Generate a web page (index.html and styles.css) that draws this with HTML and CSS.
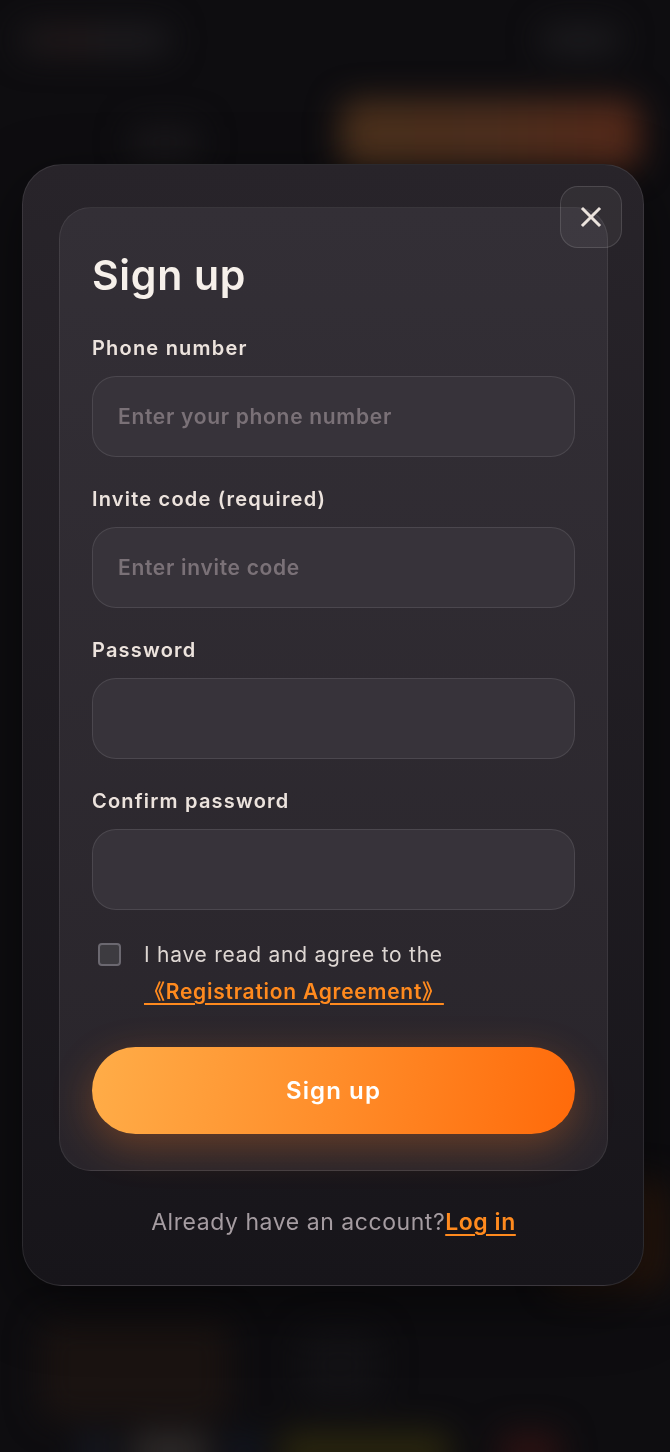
FILE: index.html
```html
<!DOCTYPE html>
<html lang="en">
<head>
  <meta charset="UTF-8" />
  <title>Sign up</title>
  <link rel="stylesheet" href="styles.css">
</head>
<body>
  <!-- page behind the dialog, blurred -->
  <div class="backdrop" aria-hidden="true">
    <header class="top-bar">
      <div class="logo"></div>
      <div class="top-btn"></div>
    </header>
    <section class="hero">
      <div class="hero-tag"></div>
      <div class="hero-cta"></div>
    </section>
    <section class="feed">
      <div class="feed-card"></div>
    </section>
    <section class="promo">
      <div class="promo-card"></div>
      <div class="promo-card dim"></div>
    </section>
    <nav class="tabbar">
      <span class="tab blue"></span>
      <span class="tab grey"></span>
      <span class="tab navy"></span>
      <span class="tab olive"></span>
      <span class="tab red"></span>
    </nav>
  </div>

  <div class="overlay">
    <div class="modal">
      <form class="form-card" onsubmit="return false">
        <h1 class="title">Sign up</h1>

        <div class="fields">
          <label class="field">
            <span class="field-label">Phone number</span>
            <input type="tel" placeholder="Enter your phone number">
          </label>
          <label class="field">
            <span class="field-label">Invite code (required)</span>
            <input type="text" placeholder="Enter invite code">
          </label>
          <label class="field">
            <span class="field-label">Password</span>
            <input type="password">
          </label>
          <label class="field">
            <span class="field-label">Confirm password</span>
            <input type="password">
          </label>
        </div>

        <label class="agree">
          <input type="checkbox" class="agree-box">
          <span class="agree-text">I have read and agree to the<br><a href="#" class="link">《Registration Agreement》</a></span>
        </label>

        <button type="submit" class="submit">Sign up</button>
      </form>

      <p class="footer">Already have an account?<a href="#" class="link">Log in</a></p>

      <button class="close" aria-label="Close">
        <svg width="22" height="22" viewBox="0 0 22 22">
          <path d="M3 3 L19 19 M19 3 L3 19" stroke="#ebe3dd" stroke-width="3" stroke-linecap="square" fill="none"/>
        </svg>
      </button>
    </div>
  </div>
</body>
</html>
```

FILE: styles.css
```css
/* reset */
* {
  margin: 0;
  padding: 0;
  box-sizing: border-box;
}

body {
  font-family: Inter, "Liberation Sans", "Noto Sans CJK SC", sans-serif;
  background-color: #0e0d10;
  height: 1452px;
  overflow: hidden;
}

/* blurred page behind the dialog */
.backdrop {
  height: 1452px;
  filter: blur(16px);
}

.top-bar {
  display: flex;
  justify-content: space-between;
  align-items: flex-start;
  height: 55px;
  padding: 25px 50px 0 20px;
}

.logo {
  width: 150px;
  height: 30px;
  border-radius: 8px;
  background: linear-gradient(90deg, #1b191b, #22191a 35%, #1f1d20 60%, #1b1a1d);
}

.top-btn {
  width: 80px;
  height: 30px;
  border-radius: 15px;
  background-color: #1c1b1e;
}

.hero {
  display: flex;
  justify-content: space-between;
  align-items: flex-start;
  padding: 45px 30px 0 130px;
}

.hero-tag {
  width: 70px;
  height: 35px;
  margin-top: 25px;
  border-radius: 8px;
  background-color: #19171a;
}

.hero-cta {
  width: 300px;
  height: 70px;
  border-radius: 18px;
  background: linear-gradient(90deg, #4a301c, #4d2f1e 50%, #55291a);
}

.feed {
  display: flex;
  justify-content: flex-end;
  padding: 1010px 0 0 0;
}

.feed-card {
  width: 120px;
  height: 110px;
  border-radius: 20px;
  background-color: #26160d;
}

.promo {
  display: flex;
  align-items: flex-start;
  gap: 70px;
  padding: 30px 40px 0;
}

.promo-card {
  width: 190px;
  height: 100px;
  border-radius: 16px;
  background-color: #1a1311;
}

.promo-card.dim {
  width: 80px;
  height: 70px;
  margin-top: 10px;
  background-color: #131215;
}

.tabbar {
  display: flex;
  gap: 20px;
  padding: 12px 80px 0;
}

.tab {
  display: block;
  width: 30px;
  height: 40px;
  border-radius: 10px;
}

.tab.blue { background-color: #171a24; }
.tab.grey { width: 80px; background-color: #2e2a29; }
.tab.navy { background-color: #121722; }
.tab.olive { width: 170px; background-color: #2a260e; }
.tab.red { width: 60px; margin-left: 30px; background-color: #2c1212; }

/* dialog */
.overlay {
  position: fixed;
  inset: 0;
  display: flex;
  align-items: flex-start;
  padding: 164px 0 0 22px;
}

.modal {
  position: relative;
  width: 622px;
  padding: 42px 35px 47px 36px;
  border: 1px solid rgba(255, 255, 255, 0.09);
  border-radius: 40px;
  background: linear-gradient(180deg, #28242a, #17151a);
  box-shadow: 0 20px 60px rgba(0, 0, 0, 0.5);
}

.form-card {
  padding: 43px 32px 36px;
  border: 1px solid rgba(255, 255, 255, 0.08);
  border-radius: 32px;
  background: linear-gradient(180deg, #332f36, #29252b);
}

.title {
  font-size: 41px;
  line-height: 49px;
  font-weight: 600;
  letter-spacing: 0.7px;
  color: #f6f0ea;
  margin-bottom: 36px;
}

.fields {
  display: flex;
  flex-direction: column;
  gap: 30px;
}

.field {
  display: block;
}

.field-label {
  display: block;
  font-size: 20px;
  line-height: 24px;
  font-weight: 600;
  letter-spacing: 1.2px;
  color: #ece3dd;
  margin-bottom: 16px;
}

.field input {
  display: block;
  width: 100%;
  height: 81px;
  padding: 0 25px;
  border: 1px solid rgba(255, 255, 255, 0.1);
  border-radius: 24px;
  background-color: #37333a;
  font-family: inherit;
  font-size: 21px;
  font-weight: 600;
  letter-spacing: 0.7px;
  color: #ece3dd;
  outline: none;
}

.field input::placeholder {
  color: #7a7177;
}

.agree {
  display: flex;
  align-items: flex-start;
  gap: 23px;
  margin-top: 26px;
}

.agree-box {
  appearance: none;
  flex: none;
  width: 23px;
  height: 23px;
  margin: 7px 0 0 6px;
  border: 2px solid #6b6870;
  border-radius: 4px;
  background-color: #3d3b40;
}

.agree-text {
  font-size: 21px;
  line-height: 37px;
  letter-spacing: 0.75px;
  color: #ddd6d2;
}

.link {
  color: #ff8a1e;
  font-weight: 600;
  text-decoration: underline;
  text-underline-offset: 4px;
  text-decoration-thickness: 2px;
}

.submit {
  display: block;
  width: 100%;
  height: 87px;
  margin-top: 37px;
  border: none;
  border-radius: 44px;
  background: linear-gradient(100deg, #ffad48, #ff8d2a 50%, #ff6a0a);
  box-shadow: 0 12px 40px rgba(255, 120, 30, 0.3);
  font-family: inherit;
  font-size: 24px;
  font-weight: 600;
  letter-spacing: 1.1px;
  color: #ffffff;
  cursor: pointer;
}

.footer {
  margin-top: 35px;
  text-align: center;
  font-size: 23px;
  line-height: 32px;
  letter-spacing: 0.55px;
  color: #a59ca1;
}

.close {
  position: absolute;
  top: 21px;
  right: 21px;
  display: flex;
  align-items: center;
  justify-content: center;
  width: 62px;
  height: 62px;
  border: 1px solid rgba(255, 255, 255, 0.13);
  border-radius: 18px;
  background-color: rgba(255, 255, 255, 0.05);
  cursor: pointer;
}
```
